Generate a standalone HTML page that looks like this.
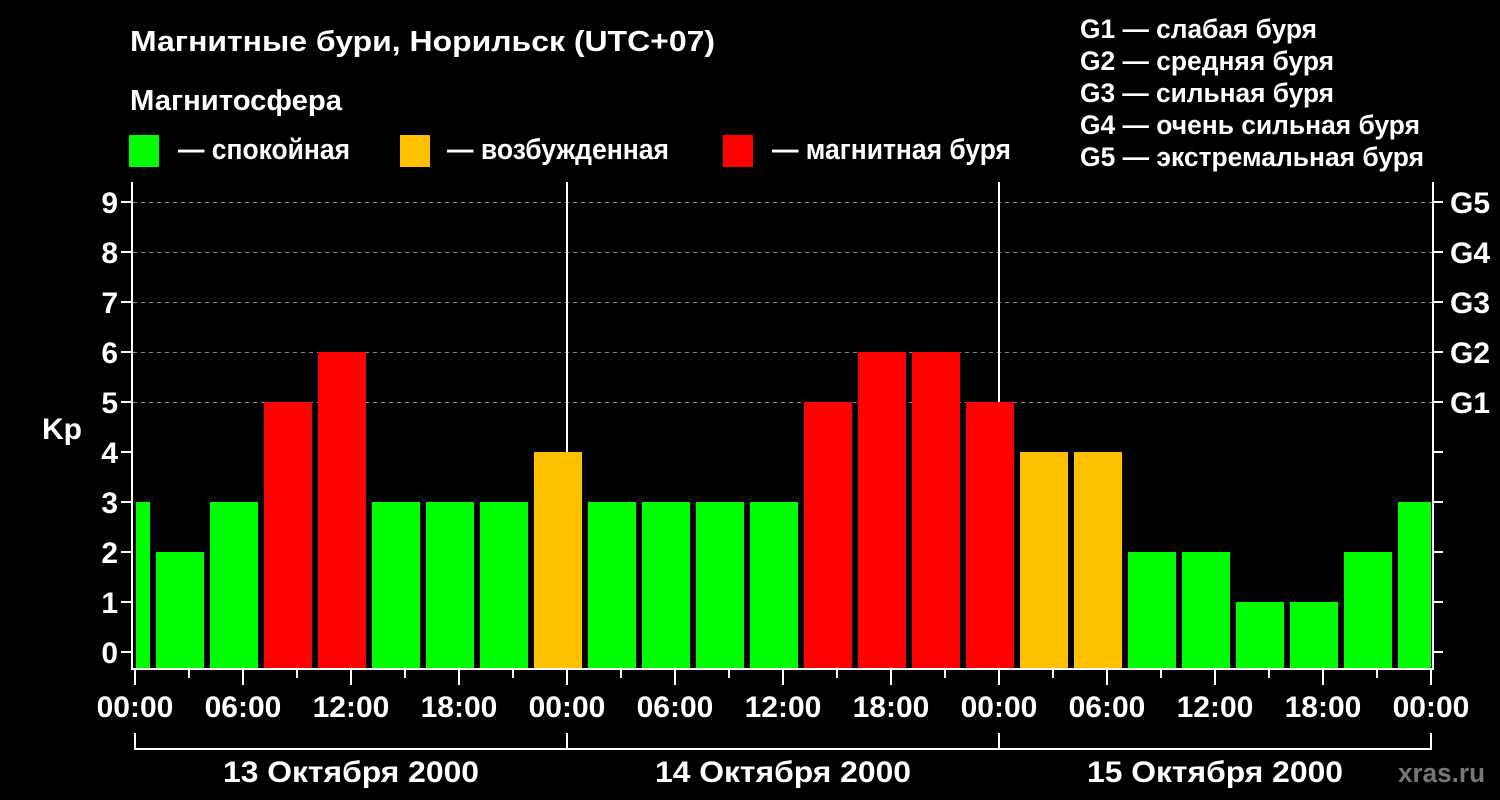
<!DOCTYPE html>
<html><head><meta charset="utf-8"><style>
html,body{margin:0;padding:0;background:#000;}
svg{display:block;}
text{font-family:"Liberation Sans",Arial,sans-serif;font-weight:bold;fill:#fff;}
</style></head><body>
<svg width="1500" height="800" viewBox="0 0 1500 800" xmlns="http://www.w3.org/2000/svg">
<rect width="1500" height="800" fill="#000"/>
<text x="130" y="51" font-size="29" textLength="585" lengthAdjust="spacingAndGlyphs">Магнитные бури, Норильск (UTC+07)</text>
<text x="130" y="110" font-size="29" textLength="212" lengthAdjust="spacingAndGlyphs">Магнитосфера</text>
<rect x="129" y="135" width="30" height="32" fill="#00ff00"/>
<rect x="400" y="135" width="30" height="32" fill="#ffc000"/>
<rect x="723" y="135" width="30" height="32" fill="#ff0000"/>
<text x="178" y="159" font-size="29" textLength="172" lengthAdjust="spacingAndGlyphs">— спокойная</text>
<text x="447" y="159" font-size="29" textLength="222" lengthAdjust="spacingAndGlyphs">— возбужденная</text>
<text x="772" y="159" font-size="29" textLength="239" lengthAdjust="spacingAndGlyphs">— магнитная буря</text>
<g font-size="27">
<text x="1080" y="38" textLength="237" lengthAdjust="spacingAndGlyphs">G1 — слабая буря</text>
<text x="1080" y="70" textLength="254" lengthAdjust="spacingAndGlyphs">G2 — средняя буря</text>
<text x="1080" y="102" textLength="254" lengthAdjust="spacingAndGlyphs">G3 — сильная буря</text>
<text x="1080" y="134" textLength="340" lengthAdjust="spacingAndGlyphs">G4 — очень сильная буря</text>
<text x="1080" y="166" textLength="344" lengthAdjust="spacingAndGlyphs">G5 — экстремальная буря</text>
</g>
<g stroke="#888" stroke-width="1" stroke-dasharray="4,4">
<line x1="133" y1="202.5" x2="1432" y2="202.5"/>
<line x1="133" y1="252.5" x2="1432" y2="252.5"/>
<line x1="133" y1="302.5" x2="1432" y2="302.5"/>
<line x1="133" y1="352.5" x2="1432" y2="352.5"/>
<line x1="133" y1="402.5" x2="1432" y2="402.5"/>
</g>
<g>
<rect x="136" y="502" width="14" height="166" fill="#00ff00"/>
<rect x="156" y="552" width="48" height="116" fill="#00ff00"/>
<rect x="210" y="502" width="48" height="166" fill="#00ff00"/>
<rect x="264" y="402" width="48" height="266" fill="#ff0000"/>
<rect x="318" y="352" width="48" height="316" fill="#ff0000"/>
<rect x="372" y="502" width="48" height="166" fill="#00ff00"/>
<rect x="426" y="502" width="48" height="166" fill="#00ff00"/>
<rect x="480" y="502" width="48" height="166" fill="#00ff00"/>
<rect x="534" y="452" width="48" height="216" fill="#ffc000"/>
<rect x="588" y="502" width="48" height="166" fill="#00ff00"/>
<rect x="642" y="502" width="48" height="166" fill="#00ff00"/>
<rect x="696" y="502" width="48" height="166" fill="#00ff00"/>
<rect x="750" y="502" width="48" height="166" fill="#00ff00"/>
<rect x="804" y="402" width="48" height="266" fill="#ff0000"/>
<rect x="858" y="352" width="48" height="316" fill="#ff0000"/>
<rect x="912" y="352" width="48" height="316" fill="#ff0000"/>
<rect x="966" y="402" width="48" height="266" fill="#ff0000"/>
<rect x="1020" y="452" width="48" height="216" fill="#ffc000"/>
<rect x="1074" y="452" width="48" height="216" fill="#ffc000"/>
<rect x="1128" y="552" width="48" height="116" fill="#00ff00"/>
<rect x="1182" y="552" width="48" height="116" fill="#00ff00"/>
<rect x="1236" y="602" width="48" height="66" fill="#00ff00"/>
<rect x="1290" y="602" width="48" height="66" fill="#00ff00"/>
<rect x="1344" y="552" width="48" height="116" fill="#00ff00"/>
<rect x="1398" y="502" width="33" height="166" fill="#00ff00"/>
</g>
<g stroke="#fff" stroke-width="2" fill="none">
<path d="M132 182 V669 H1433 V182"/>
<line x1="567" y1="182" x2="567" y2="452"/>
<line x1="999" y1="182" x2="999" y2="402"/>
</g>
<g stroke="#fff" stroke-width="2">
<line x1="121" y1="202" x2="132" y2="202"/><line x1="121" y1="252" x2="132" y2="252"/>
<line x1="121" y1="302" x2="132" y2="302"/><line x1="121" y1="352" x2="132" y2="352"/>
<line x1="121" y1="402" x2="132" y2="402"/><line x1="121" y1="452" x2="132" y2="452"/>
<line x1="121" y1="502" x2="132" y2="502"/><line x1="121" y1="552" x2="132" y2="552"/>
<line x1="121" y1="602" x2="132" y2="602"/><line x1="121" y1="652" x2="132" y2="652"/>
<line x1="1433" y1="202" x2="1443" y2="202"/><line x1="1433" y1="252" x2="1443" y2="252"/>
<line x1="1433" y1="302" x2="1443" y2="302"/><line x1="1433" y1="352" x2="1443" y2="352"/>
<line x1="1433" y1="402" x2="1443" y2="402"/><line x1="1433" y1="452" x2="1443" y2="452"/>
<line x1="1433" y1="502" x2="1443" y2="502"/><line x1="1433" y1="552" x2="1443" y2="552"/>
<line x1="1433" y1="602" x2="1443" y2="602"/><line x1="1433" y1="652" x2="1443" y2="652"/>
<line x1="135" y1="670" x2="135" y2="685"/><line x1="243" y1="670" x2="243" y2="685"/>
<line x1="351" y1="670" x2="351" y2="685"/><line x1="459" y1="670" x2="459" y2="685"/>
<line x1="567" y1="670" x2="567" y2="685"/><line x1="675" y1="670" x2="675" y2="685"/>
<line x1="783" y1="670" x2="783" y2="685"/><line x1="891" y1="670" x2="891" y2="685"/>
<line x1="999" y1="670" x2="999" y2="685"/><line x1="1107" y1="670" x2="1107" y2="685"/>
<line x1="1215" y1="670" x2="1215" y2="685"/><line x1="1323" y1="670" x2="1323" y2="685"/>
<line x1="1431" y1="670" x2="1431" y2="685"/>
<line x1="189" y1="670" x2="189" y2="678"/><line x1="297" y1="670" x2="297" y2="678"/>
<line x1="405" y1="670" x2="405" y2="678"/><line x1="513" y1="670" x2="513" y2="678"/>
<line x1="621" y1="670" x2="621" y2="678"/><line x1="729" y1="670" x2="729" y2="678"/>
<line x1="837" y1="670" x2="837" y2="678"/><line x1="945" y1="670" x2="945" y2="678"/>
<line x1="1053" y1="670" x2="1053" y2="678"/><line x1="1161" y1="670" x2="1161" y2="678"/>
<line x1="1269" y1="670" x2="1269" y2="678"/><line x1="1377" y1="670" x2="1377" y2="678"/>
<line x1="135" y1="749" x2="1432" y2="749"/>
<line x1="135" y1="733" x2="135" y2="750"/><line x1="567" y1="733" x2="567" y2="750"/>
<line x1="999" y1="733" x2="999" y2="750"/><line x1="1431" y1="733" x2="1431" y2="750"/>
</g>
<g font-size="30" text-anchor="end">
<text x="118" y="213">9</text><text x="118" y="263">8</text><text x="118" y="313">7</text>
<text x="118" y="363">6</text><text x="118" y="413">5</text><text x="118" y="463">4</text>
<text x="118" y="513">3</text><text x="118" y="563">2</text><text x="118" y="613">1</text>
<text x="118" y="663">0</text>
</g>
<text x="42" y="439" font-size="30">Kp</text>
<g font-size="30">
<text x="1450" y="213">G5</text><text x="1450" y="263">G4</text><text x="1450" y="313">G3</text>
<text x="1450" y="363">G2</text><text x="1450" y="413">G1</text>
</g>
<g font-size="30" text-anchor="middle">
<text x="135" y="717">00:00</text><text x="243" y="717">06:00</text><text x="351" y="717">12:00</text>
<text x="459" y="717">18:00</text><text x="567" y="717">00:00</text><text x="675" y="717">06:00</text>
<text x="783" y="717">12:00</text><text x="891" y="717">18:00</text><text x="999" y="717">00:00</text>
<text x="1107" y="717">06:00</text><text x="1215" y="717">12:00</text><text x="1323" y="717">18:00</text>
<text x="1431" y="717">00:00</text>
<text x="351" y="782" textLength="256" lengthAdjust="spacingAndGlyphs">13 Октября 2000</text>
<text x="783" y="782" textLength="256" lengthAdjust="spacingAndGlyphs">14 Октября 2000</text>
<text x="1215" y="782" textLength="256" lengthAdjust="spacingAndGlyphs">15 Октября 2000</text>
</g>
<text x="1398" y="782" font-size="27" style="fill:#777" textLength="87" lengthAdjust="spacingAndGlyphs">xras.ru</text>
</svg>
</body></html>
